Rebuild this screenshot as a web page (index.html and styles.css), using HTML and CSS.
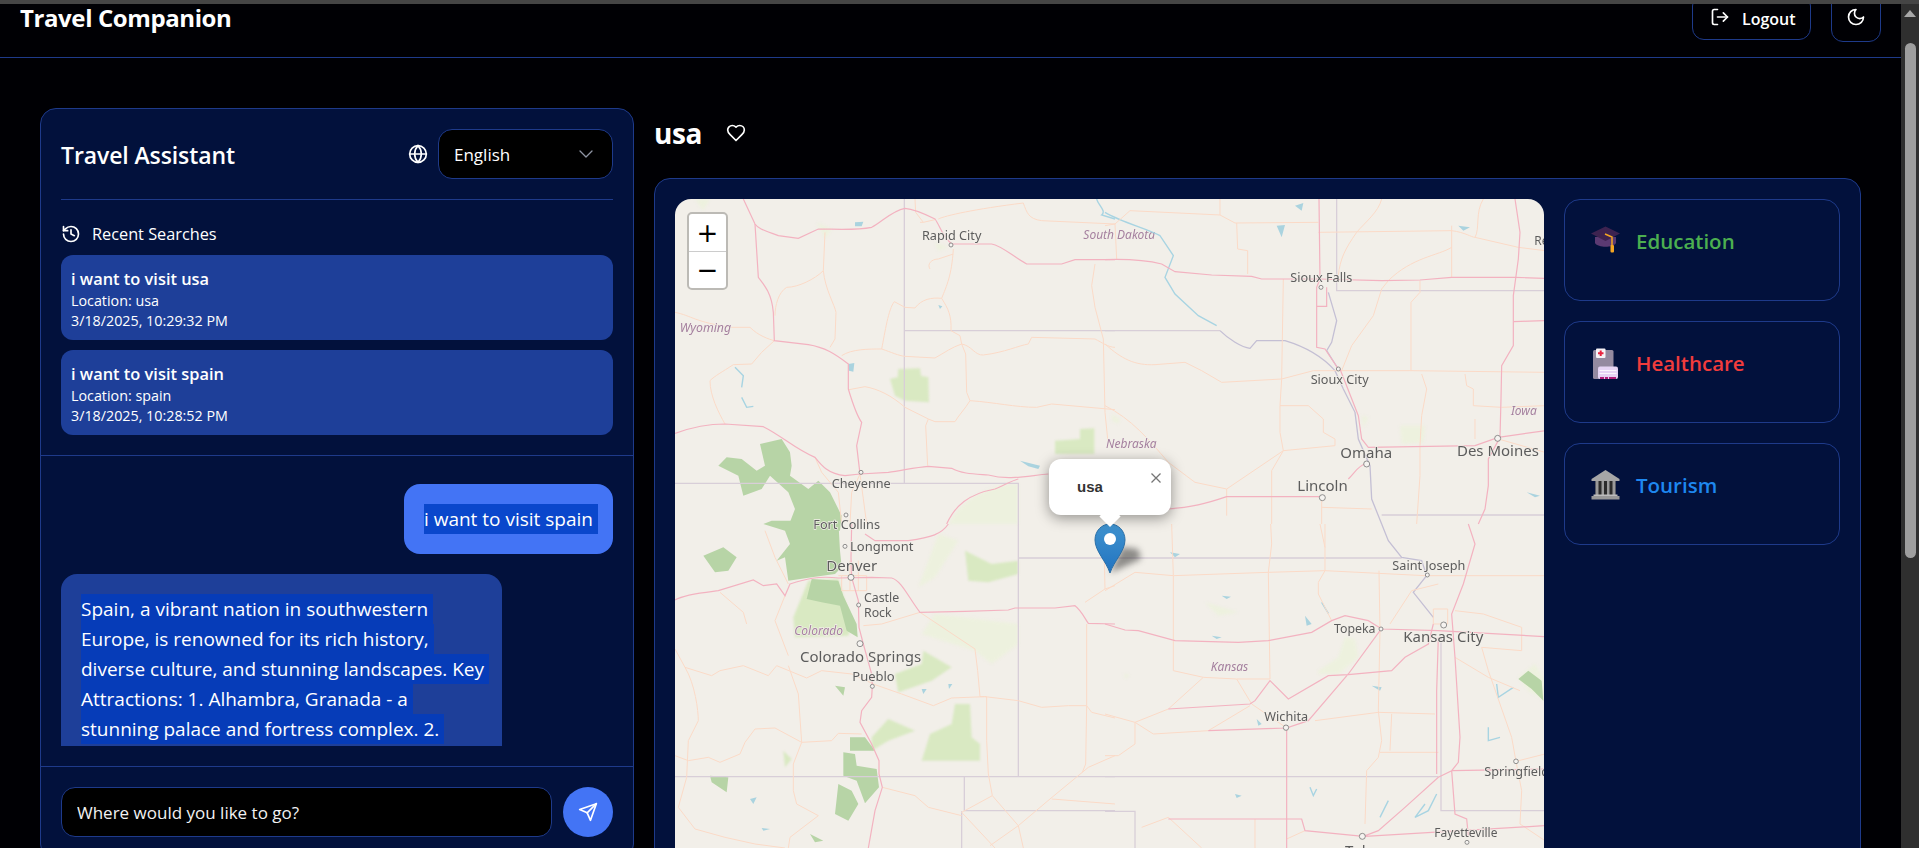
FILE: index.html
```html
<!DOCTYPE html>
<html lang="en">
<head>
<meta charset="utf-8">
<title>Travel Companion</title>
<link rel="stylesheet" href="styles.css">
</head>
<body>
<div class="chrome"></div>
<div class="shell">
  <div class="page">
    <header class="header">
      <h1 class="brand">Travel Companion</h1>
      <div class="header-actions">
        <button class="btn-logout">
          <svg class="ico" viewBox="0 0 24 24"><path d="M9 21H5a2 2 0 0 1-2-2V5a2 2 0 0 1 2-2h4"/><polyline points="16 17 21 12 16 7"/><line x1="21" y1="12" x2="9" y2="12"/></svg>
          <span>Logout</span>
        </button>
        <button class="btn-theme">
          <svg class="ico" viewBox="0 0 24 24"><path d="M12 3a6 6 0 0 0 9 9 9 9 0 1 1-9-9Z"/></svg>
        </button>
      </div>
    </header>
    <main class="main">
      <section class="assistant">
        <div class="assistant-head">
          <h2 class="assistant-title">Travel Assistant</h2>
          <div class="lang">
            <svg class="ico" viewBox="0 0 24 24"><circle cx="12" cy="12" r="10"/><path d="M12 2a14.5 14.5 0 0 0 0 20 14.5 14.5 0 0 0 0-20"/><path d="M2 12h20"/></svg>
            <div class="select">
              <span>English</span>
              <svg class="chev" viewBox="0 0 24 24"><path d="m6 9 6 6 6-6"/></svg>
            </div>
          </div>
        </div>
        <div class="recent">
          <div class="recent-title">
            <svg class="ico" viewBox="0 0 24 24"><path d="M3 12a9 9 0 1 0 9-9 9.75 9.75 0 0 0-6.74 2.74L3 8"/><path d="M3 3v5h5"/><path d="M12 7v5l4 2"/></svg>
            <span>Recent Searches</span>
          </div>
          <div class="recent-item">
            <div class="recent-q">i want to visit usa</div>
            <div class="recent-meta">Location: usa</div>
            <div class="recent-meta">3/18/2025, 10:29:32 PM</div>
          </div>
          <div class="recent-item">
            <div class="recent-q">i want to visit spain</div>
            <div class="recent-meta">Location: spain</div>
            <div class="recent-meta">3/18/2025, 10:28:52 PM</div>
          </div>
        </div>
        <div class="messages">
          <div class="bubble bubble-user"><span class="sel sel-user">i want to visit spain</span></div>
          <div class="bubble bubble-ai">
            <span class="sel">Spain, a vibrant nation in southwestern</span>
            <span class="sel">Europe, is renowned for its rich history,</span>
            <span class="sel">diverse culture, and stunning landscapes. Key</span>
            <span class="sel">Attractions: 1. Alhambra, Granada - a</span>
            <span class="sel">stunning palace and fortress complex. 2.</span>
          </div>
        </div>
        <form class="composer">
          <input class="composer-input" type="text" placeholder="Where would you like to go?">
          <button class="composer-send" type="button">
            <svg class="ico" viewBox="0 0 24 24"><path d="m22 2-7 20-4-9-9-4Z"/><path d="M22 2 11 13"/></svg>
          </button>
        </form>
      </section>

      <section class="destination">
        <div class="dest-head">
          <h2 class="dest-title">usa</h2>
          <svg class="ico" viewBox="0 0 24 24"><path d="M19 14c1.49-1.46 3-3.21 3-5.5A5.5 5.5 0 0 0 16.5 3c-1.76 0-3 .5-4.5 2-1.5-1.5-2.74-2-4.5-2A5.5 5.5 0 0 0 2 8.5c0 2.3 1.5 4.05 3 5.5l7 7Z"/></svg>
        </div>
        <div class="dest-panel">
          <div class="map">
            <svg class="map-art" viewBox="0 0 869 700">
              <!-- north-west quadrant -->
              <g transform="scale(.33333)">
                <path class="fd" d="M255 735 L320 720 L345 760 L350 800 L345 830 L400 870 L430 845 L465 880 L500 950 L495 995 L335 995 L360 930 L340 880 L285 830 L260 870 L205 890 L190 830 L130 800 L155 775 L200 780 L245 815 L270 800 Z"/>
                <path class="fl" d="M670 510 L735 508 L738 530 L760 535 L762 610 L690 605 L660 590 L645 540 L668 535 Z"/>
                <path class="fl" d="M1140 725 L1215 720 L1215 690 L1258 688 L1258 765 L1140 765 Z"/>
                <path class="fp" d="M820 975 C860 900 930 870 1000 855 L1030 855 L1030 975 Z"/>
                <path class="fp" d="M780 130 L820 145 L790 155 Z M425 70 L470 90 L450 120 Z M60 0 L105 0 L85 35 Z"/>
                <path class="wa" d="M1035 785 L1095 800 L1090 810 L1060 802 Z M540 70 L565 68 L560 82 L540 82 Z M520 495 L538 492 L535 518 L522 515 Z M790 318 L802 322 L795 330 Z"/>
                <path class="ri" d="M180 505 L205 530 L200 565 M200 595 L215 625 L235 622 M1265 0 C1270 20 1295 35 1280 48 L1320 60"/>
                <path class="b" d="M688 0 V853 M688 395 H1320 M0 853 H1030 V975"/>
                <path class="r" d="M720 0 L722 40 L745 70 L780 62 M745 70 L735 70 M790 60 C810 50 900 30 1045 12 C1055 40 1060 60 1100 65 L1320 75"/>
                <path class="r" d="M450 100 L445 215 C450 270 480 320 483 340 L480 420 L465 445 M445 215 C420 240 370 265 335 265 C310 280 300 320 300 350"/>
                <path class="r" d="M0 340 C50 350 60 370 170 385 L225 385 C250 410 280 420 298 425 L260 460 L230 495 L175 497 C140 520 120 530 105 545 C105 590 130 640 150 675"/>
                <path class="r" d="M500 470 C530 450 580 450 620 450 C650 460 670 470 690 472 L780 477 C810 460 830 445 860 435 C890 440 900 470 925 468 C990 460 1030 440 1060 435 L1070 415 L1260 420 C1280 430 1300 445 1320 445"/>
                <path class="r" d="M620 450 C630 400 640 330 658 308 L690 325 L720 327 C740 300 770 295 800 298 C820 330 830 350 828 395 L855 410 L860 435 L872 465 L875 580 L885 605 C960 610 1020 625 1085 625 L1130 615 L1320 632"/>
                <path class="r" d="M885 605 C870 630 850 650 840 668 L780 668 L760 660 L690 625 C650 590 610 570 570 563 L522 572 M760 660 L752 680 L758 800 M800 298 C815 260 830 230 835 150 M835 165 L790 180 C770 180 755 195 765 210"/>
                <path class="r" d="M1260 195 L1250 260 L1260 325 L1285 420 L1290 640 L1300 740 M420 775 L440 820 L490 880 L500 975 M555 825 L565 900 L575 975 M525 975 L530 880 L555 825"/>
                <path class="m" d="M205 0 L240 75 C250 90 270 95 310 110 L370 118 L430 90 C480 90 540 95 590 85 C620 70 650 35 690 28 C720 30 760 50 780 60 C795 80 800 110 830 135 L950 135 C980 140 1010 170 1055 195 L1160 195 L1200 182 L1320 182"/>
                <path class="m" d="M240 75 L250 235 C270 260 290 285 295 340 L298 425 L400 437 C450 445 480 465 520 495 L520 570 C535 620 545 650 560 670 L545 740 L555 825"/>
                <path class="m" d="M0 703 C50 685 100 675 150 675 L265 683 C320 710 360 750 420 775 C440 800 460 825 510 830 L555 825 L640 820 C680 815 720 805 760 802 L830 808 C860 825 900 825 940 828 C1000 845 1060 830 1120 825 M815 975 C840 920 880 885 960 870 C985 860 1010 845 1030 840"/>
                <circle class="dot" cx="828" cy="138" r="6"/>
                <circle class="dot" cx="558" cy="820" r="6"/>
                <circle class="dot" cx="513" cy="948" r="6"/>
                <text class="city" font-size="38" x="741" y="124">Rapid City</text>
                <text class="state" font-size="37" x="14" y="400">Wyoming</text>
                <text class="state" font-size="36" x="1225" y="120">South Dakota</text>
                <text class="city" font-size="38" x="470" y="866">Cheyenne</text>
              </g>
              <!-- north-east quadrant -->
              <g transform="translate(430 0) scale(.33333)">
                <path class="fp" d="M20 645 L45 660 L40 675 L22 665 Z M885 680 L960 680 L955 730 L890 735 Z M770 650 L790 655 L775 685 Z"/>
                <path class="wa" d="M515 80 L540 78 L530 115 Z M570 20 L595 12 L590 35 Z M1060 80 L1095 85 L1075 95 Z M1265 880 L1305 890 L1290 895 Z"/>
                <path class="ri" d="M0 40 C50 70 130 90 165 110 L205 170 L180 235 L210 285 L280 350 L335 380"/>
                <path class="b" d="M695 0 V275 H1320 M0 395 H345 M830 948 H1320"/>
                <path class="bw" d="M345 395 C370 420 410 445 435 448 L455 425 L540 425 C590 440 650 470 690 515 L715 570 L750 640 L760 720 L795 800 L800 900 L830 975 M670 280 L695 365 L680 430 L665 455 L700 510"/>
                <path class="r" d="M0 80 L30 75 L75 35 L345 48 L390 72 L640 70 M345 0 L345 48 M395 72 L398 150 L428 155 L428 225 M30 75 L35 180"/>
                <path class="r" d="M640 100 L1040 95 C1080 100 1100 115 1110 115 L1240 145 L1320 155 M830 0 C820 40 780 70 755 100 C720 150 705 180 700 230"/>
                <path class="r" d="M1040 145 C1000 170 920 175 850 245 L830 270 L805 350 L740 440 L710 515 M1040 80 V235 M945 245 V280 L918 310 V515 M1135 0 C1110 40 1125 90 1110 115"/>
                <path class="r" d="M0 435 C50 480 90 500 150 497 L240 490 L290 515 L350 550 L530 540 L625 515 L700 515 L915 515 L1320 520"/>
                <path class="r" d="M535 240 L530 540 L525 620 L525 700 L535 755 L500 815 V975 M525 620 L610 620 L655 660 V700 L690 720 V740 L535 755 L365 870 V950"/>
                <path class="r" d="M0 620 C80 660 130 720 190 790 L270 850 L365 870 M950 525 L965 570 L950 650 L945 740 V830 L935 975 M1080 525 L1085 560 L1105 570 V620 L1190 625 L1320 620 M1110 660 V720 M650 893 V975 M650 925 L800 930 M1180 720 L1320 760"/>
                <path class="m" d="M0 182 C60 180 130 185 170 195 L210 218 L320 228 L440 232 L470 240 L640 240 L830 245 L945 243 L1040 235 L1230 235 L1320 238"/>
                <path class="m" d="M642 0 L645 240 L635 265 V445 L660 450 L700 510 M635 265 V322 H665 V265"/>
                <path class="m" d="M1230 0 L1245 100 L1240 180 L1225 290 V440 L1190 500 L1188 600 L1185 715 L1150 780 V860 L1140 930 L1120 975"/>
                <path class="m" d="M705 510 L760 650 L770 720 L790 745 L1110 740 L1180 715 L1320 695 M190 930 C260 925 300 915 365 893 H650 M730 840 C750 820 760 800 780 795 M1225 368 L1320 365"/>
                <circle class="dot" cx="648" cy="265" r="6"/>
                <circle class="dot" cx="700" cy="510" r="6"/>
                <circle class="dot" cx="785" cy="795" r="9"/>
                <circle class="dot" cx="652" cy="896" r="9"/>
                <circle class="dot" cx="1178" cy="718" r="9"/>
                <text class="city" font-size="38" x="556" y="250">Sioux Falls</text>
                <text class="city" font-size="38" x="617" y="555">Sioux City</text>
                <text class="city" font-size="45" x="706" y="776">Omaha</text>
                <text class="city" font-size="45" x="1056" y="770">Des Moines</text>
                <text class="city" font-size="45" x="577" y="877">Lincoln</text>
                <text class="city" font-size="36" x="1288" y="137">Re</text>
                <text class="state" font-size="36" x="1218" y="647">Iowa</text>
                <text class="state" font-size="36" x="3" y="748">Nebraska</text>
              </g>
              <!-- south-west quadrant -->
              <g transform="translate(0 325) scale(.33333)">
                <path class="fp" d="M740 330 L900 380 L950 420 L1030 360 V300 L780 270 Z M730 190 L790 30 L850 50 L780 160 Z"/>
                <path class="fl" d="M590 640 L640 585 L720 620 L640 650 L590 680 Z M765 630 L830 600 L840 540 L885 540 L890 640 L915 660 V710 H740 Z M660 450 L740 420 L745 380 L830 430 L770 470 L670 505 Z M870 80 L950 120 L1030 110 V150 L940 175 L880 170 Z M400 170 L490 165 L530 300 L520 335 L360 340 L355 280 Z M325 680 L350 705 L330 730 Z"/>
                <path class="fd" d="M265 0 L290 -10 H490 L495 80 L500 130 L480 150 L410 160 L340 170 L330 100 L305 110 L345 60 L330 20 Z M85 95 L145 70 L185 100 L160 140 L120 145 Z M505 685 L540 690 L545 725 L605 735 L612 790 L570 838 L545 770 L505 755 Z M490 780 L530 800 L550 840 L520 890 L480 870 Z M105 755 L160 760 L155 805 L110 775 Z M525 640 L570 640 L600 680 L525 680 Z M480 485 L510 490 L505 515 Z M405 930 L445 950 L420 955 Z"/>
                <path class="fd" d="M410 165 L490 170 L505 215 L545 300 L548 340 L515 320 L495 245 L440 235 L395 225 Z"/>
                <path class="wa" d="M740 495 L755 495 L745 510 Z M820 480 L832 480 L822 495 Z M225 825 L245 820 L235 840 Z M260 912 L285 915 L265 920 Z"/>
                <path class="b" d="M1030 0 V757 M1030 102 H1320 M0 758 H1320 M868 758 V860 H1320 M860 862 V972"/>
                <path class="r" d="M0 375 L30 430 L110 455 L135 440 L205 425 L280 455 L305 425 L395 462 L440 440 L530 450 L600 482 L680 510 L775 545 L830 522 L930 518 L1030 530 L1100 550 L1180 545 H1235 L1250 565 L1320 582"/>
                <path class="r" d="M30 430 C60 480 70 560 70 590 L40 650 L35 760 L10 850 L60 915 L150 940 L240 960 L330 972 M0 695 L40 710 L100 700 L135 715 L195 690 L210 655 L240 615 L300 612 L380 655 L470 650 L490 628 L560 630"/>
                <path class="r" d="M380 655 L355 720 V800 L365 840 L430 875 L345 940 L340 972 M340 425 L370 510 L380 655 M135 205 L205 265 L215 300 M330 215 L300 290 L340 395 M270 20 L300 100 L340 180"/>
                <path class="r" d="M735 265 L900 375 L908 440 L915 518 H935 V650 L940 750 L952 815 L1030 905 L1045 972 M1320 695 L1240 730 L1125 825 L1030 905 L945 965 M952 815 L860 865 L960 972 M622 790 L720 815 L760 850 L860 875 M565 305 L620 300 L735 265 M1130 825 L1320 840 M1235 545 L1232 720 L1222 745 M1235 300 V545 M1230 235 L1290 195 L1320 185 M1290 195 L1288 100"/>
                <path class="r" d="M490 155 H575 V200 H500 V155 M525 110 V200 M550 110 V200"/>
                <path class="m" d="M820 0 C800 30 770 40 700 50 H600 L570 30 M0 228 C30 210 90 205 130 200 L235 168 L265 185 L305 180 L330 215 L345 180 C390 165 430 155 490 162 L590 160 L650 162 C680 170 700 220 735 265 L870 262 L1000 258 L1020 252 H1140 L1200 245 C1220 260 1230 285 1240 298 L1320 300"/>
                <path class="m" d="M530 0 L528 100 L530 160 L550 230 L552 310 L565 360 L590 450 L592 487 L590 520 L560 560 L555 595 L590 660 L612 710 V750 L622 790 L600 860 L580 972"/>
                <circle class="dot" cx="510" cy="67" r="6"/>
                <circle class="dot" cx="528" cy="160" r="9"/>
                <circle class="dot" cx="551" cy="243" r="6"/>
                <circle class="dot" cx="555" cy="359" r="9"/>
                <circle class="dot" cx="592" cy="487" r="6"/>
                <text class="city" font-size="38" x="415" y="15">Fort Collins</text>
                <text class="city" font-size="39" x="525" y="80">Longmont</text>
                <text class="city" font-size="45" x="454" y="142">Denver</text>
                <text class="city" font-size="37" x="567" y="235">Castle</text>
                <text class="city" font-size="37" x="567" y="280">Rock</text>
                <text class="state" font-size="36" x="358" y="332">Colorado</text>
                <text class="city" font-size="45" x="375" y="414">Colorado Springs</text>
                <text class="city" font-size="39" x="532" y="470">Pueblo</text>
              </g>
              <!-- south-east quadrant -->
              <g transform="translate(430 325) scale(.33333)">
                <path class="fp" d="M640 440 L700 400 L720 340 L750 345 L760 400 L700 450 L640 450 Z M300 235 L400 265 L340 275 Z M55 450 L75 452 L62 465 Z M1240 460 L1290 420 L1320 470 V530 L1270 500 Z"/>
                <path class="fd" d="M1240 465 L1270 440 L1310 470 L1315 530 L1280 495 Z"/>
                <path class="wa" d="M195 85 L225 90 L210 100 Z M350 215 L378 218 L365 225 Z M600 275 L620 300 L605 305 Z M320 335 L350 340 L335 345 Z M455 585 L470 600 L460 605 Z M800 485 L830 490 L825 500 Z M390 810 L410 815 L395 822 Z"/>
                <path class="ri" d="M650 235 L670 268 M1150 610 L1150 650 L1185 640 M1175 480 L1180 520 L1225 490 M960 840 L930 880 L970 860 L995 810 M850 830 L825 880 M615 790 L625 815 L635 795"/>
                <path class="b" d="M0 102 H890 M0 758 H1000 M1008 340 V860 H1320 M0 862 H90 V972"/>
                <path class="bw" d="M830 0 L850 50 L890 100 L950 110 L965 155 L925 205 L985 280"/>
                <path class="r" d="M0 200 L90 145 L205 155 L490 145 L660 140 L960 155 L1075 155 L1320 155 M200 0 L205 155 V440 L295 460 L395 465 H495 L490 145 L500 60 L497 0"/>
                <path class="r" d="M660 0 V140 L640 175 V210 L680 290 M645 0 L660 70 M822 140 L825 320 L820 560 L830 650 L820 700 L785 740 L780 900 M295 460 L190 555 L90 595 L0 570 M395 465 L440 540 L545 612 M90 595 V660 L40 695 H0 M90 595 L145 630 L310 620 L435 545"/>
                <path class="r" d="M1050 260 L1135 270 L1250 310 V380 L1130 370 L1150 440 L1220 640 L1233 712 L1320 690 M1050 400 L1150 460 L1245 500 M630 590 L820 565 L990 570 M825 685 H1000 M860 570 L855 680 M110 910 L190 880 L290 972 M450 885 V972 M600 920 L545 945 M1233 712 L1250 800 L1245 900 L1320 950 M1000 180 L920 200 L855 300 M985 255 H1028 V300 H985 Z"/>
                <path class="m" d="M0 300 L60 318 L100 320 L210 350 L400 355 L490 350 L620 325 L680 290 L720 275 L790 290 L830 315 L1000 320 L1320 338"/>
                <path class="m" d="M825 320 L730 450 L610 590 L545 612 V972 M310 620 L545 612 M985 300 L970 360 L900 400 L860 440 L730 452 L670 455 L550 525 L495 470 L450 530 L435 540 L190 555"/>
                <path class="m" d="M1090 0 L1110 60 L1075 180 L1040 270 L1050 400 L1065 640 L1060 715 L1040 740 L1000 760 L900 850 L820 920 L775 937 L600 920 L590 885 H190 M1040 740 L1320 735 M1040 740 L1050 870 L1085 885 L1090 935 M1000 340 L995 500 V750 M780 937 L1320 905"/>
                <circle class="dot" cx="967" cy="153" r="6"/>
                <circle class="dot" cx="828" cy="315" r="6"/>
                <circle class="dot" cx="1016" cy="303" r="9"/>
                <circle class="dot" cx="543" cy="611" r="8"/>
                <circle class="dot" cx="1233" cy="712" r="7"/>
                <circle class="dot" cx="772" cy="937" r="9"/>
                <circle class="dot" cx="1086" cy="955" r="6"/>
                <text class="city" font-size="38" x="862" y="138">Saint Joseph</text>
                <text class="city" font-size="37" x="687" y="328">Topeka</text>
                <text class="city" font-size="45" x="895" y="355">Kansas City</text>
                <text class="state" font-size="36" x="317" y="440">Kansas</text>
                <text class="city" font-size="38" x="478" y="592">Wichita</text>
                <text class="city" font-size="38" x="1138" y="755">Springfield</text>
                <text class="city" font-size="36" x="988" y="940">Fayetteville</text>
                <text class="city" font-size="45" x="720" y="995">Tulsa</text>
              </g>
            </svg>

            <div class="zoom">
              <div class="zoom-btn">+</div>
              <div class="zoom-btn">&#8722;</div>
            </div>

            <svg class="pin" viewBox="0 0 70 56">
              <defs>
                <linearGradient id="pinFill" x1="0" y1="0" x2="0" y2="1">
                  <stop offset="0" stop-color="#3f93cf"/>
                  <stop offset="1" stop-color="#2273c0"/>
                </linearGradient>
              </defs>
              <path class="pin-shadow" d="M16 50 L28 24 L44 26 L47 36 Z"/>
              <path d="M16 50 C12 38 1 28 1 17 C1 8 7.500 1 16 1 C24.500 1 31 8 31 17 C31 28 20 38 16 50 Z" fill="url(#pinFill)" stroke="#2a6fa8"/>
              <circle cx="16" cy="16" r="6" fill="#fff"/>
            </svg>

            <div class="popup">
              <b class="popup-text">usa</b>
              <svg class="popup-close" viewBox="0 0 12 12"><path d="M1.500 1.500 10.500 10.500 M10.500 1.500 1.500 10.500"/></svg>
              <span class="popup-tip"></span>
            </div>
          </div>

          <aside class="topics">
            <div class="topic">
              <svg class="emoji" viewBox="0 0 29 31">
                <path d="M4 11H25V17C22 22 7 22 4 17Z" fill="#5b3a72"/>
                <path d="M0 7.500 14.500 .5 29 7.500 14.500 15Z" fill="#3d2350"/>
                <path d="M14 8 21 11V20" fill="none" stroke="#f5a623" stroke-width="1.500"/>
                <rect x="19.500" y="19" width="3.500" height="7.500" rx="1" fill="#f5a623"/>
              </svg>
              <span class="topic-label topic-green">Education</span>
            </div>
            <div class="topic">
              <svg class="emoji" viewBox="0 0 29 31">
                <rect x="2" y="2" width="20.500" height="29" rx="1.500" fill="#948aa0"/>
                <rect x="5" y=".5" width="9.500" height="9.500" rx="1" fill="#f6f2f6"/>
                <path d="M9.700 2.500V8M7 5.200H12.500" stroke="#e8233f" stroke-width="2"/>
                <rect x="7" y="18.500" width="20" height="12.500" rx="2" fill="#e6d5f5"/>
                <path d="M8.500 22.500H25.500M8.500 25.500H25.500" stroke="#fff" stroke-width=".8"/>
                <path d="M9 29H13V31H9ZM14 29H17V31H14ZM18 29H25V31H18Z" fill="#b0207a"/>
              </svg>
              <span class="topic-label topic-red">Healthcare</span>
            </div>
            <div class="topic">
              <svg class="emoji" viewBox="0 0 29 31">
                <path d="M14.500 0 .5 9V11H28.500V9Z" fill="#a6a6a6"/>
                <rect x="4.500" y="11" width="20" height="14" fill="#2b2b2b"/>
                <path d="M4.500 11H7.500V25H4.500ZM10.500 11H13V25H10.500ZM16 11H18.500V25H16ZM21.500 11H24.500V25H21.500Z" fill="#9a9a9a"/>
                <rect x="2.500" y="24.500" width="24" height="1.500" fill="#bdbdbd"/>
                <rect x=".5" y="26" width="28" height="3.500" fill="#989898"/>
              </svg>
              <span class="topic-label topic-blue">Tourism</span>
            </div>
          </aside>
        </div>
      </section>
    </main>
  </div>
  <div class="scrollbar">
    <span class="scroll-arrow"></span>
    <span class="scroll-thumb"></span>
  </div>
</div>
</body>
</html>
```

FILE: styles.css
```css
* { box-sizing: border-box; }

html, body { height: 100%; }

body {
  margin: 0;
  display: flex;
  flex-direction: column;
  overflow: hidden;
  background: #000;
  color: #fff;
  font-family: "Open Sans", "Noto Sans", sans-serif;
  font-size: 17px;
}

h1, h2 { margin: 0; }

button {
  font: inherit;
  color: inherit;
  cursor: pointer;
}

.ico {
  flex: none;
  width: 20px;
  height: 20px;
  fill: none;
  stroke: currentColor;
  stroke-width: 2;
  stroke-linecap: round;
  stroke-linejoin: round;
}

.chrome {
  flex: none;
  height: 4px;
  background: #454545;
}

.shell {
  flex: 1;
  min-height: 0;
  display: flex;
}

.page {
  flex: 1;
  min-width: 0;
  overflow: hidden;
  background: #000004;
}

/* the page is scrolled a little: the header's top edge is off-screen */
.header {
  margin-top: -28px;
  display: flex;
  align-items: center;
  justify-content: space-between;
  padding: 16px 20px 15px;
  border-bottom: 1px solid #1e3a8a;
}

.brand {
  font-size: 24px;
  font-weight: 700;
  letter-spacing: -.4px;
  line-height: 26px;
  position: relative;
  top: 1px;
}

.header-actions {
  display: flex;
  align-items: center;
  gap: 20px;
}

.btn-logout {
  width: 119px;
  height: 46px;
  display: flex;
  align-items: center;
  gap: 12px;
  padding: 0 0 0 17px;
  background: transparent;
  border: 1px solid #1e3a8a;
  border-radius: 12px;
  font-size: 16px;
  font-weight: 600;
}

.btn-logout span { position: relative; top: 2px; }

.btn-theme {
  width: 50px;
  height: 50px;
  display: flex;
  align-items: center;
  justify-content: center;
  padding: 0;
  background: transparent;
  border: 1px solid #1e3a8a;
  border-radius: 12px;
}

.main {
  display: grid;
  grid-template-columns: 594px 1fr;
  gap: 20px;
  align-items: start;
  padding: 50px 40px 0;
}

.assistant {
  height: 752px;
  background: #02113c;
  border: 1px solid #1e3a8a;
  border-radius: 16px;
}

.assistant-head {
  display: flex;
  align-items: center;
  justify-content: space-between;
  margin: 0 20px;
  padding: 20px 0;
  border-bottom: 1px solid #1e3a8a;
}

.assistant-title {
  padding-top: 2px;
  font-size: 23px;
  font-weight: 600;
  letter-spacing: -.1px;
}

.lang {
  display: flex;
  align-items: center;
  gap: 10px;
}

.select {
  width: 175px;
  height: 50px;
  display: flex;
  align-items: center;
  justify-content: space-between;
  padding: 0 14px 0 15px;
  background: #000;
  border: 1px solid #1e3a8a;
  border-radius: 14px;
}

.chev {
  width: 24px;
  height: 24px;
  fill: none;
  stroke: #8f95a3;
  stroke-width: 1.300;
  stroke-linecap: round;
  stroke-linejoin: round;
}

.recent {
  display: flex;
  flex-direction: column;
  gap: 10px;
  padding: 21px 20px 20px;
  border-bottom: 1px solid #1e3a8a;
}

.recent-title {
  display: flex;
  align-items: center;
  gap: 11px;
  height: 24px;
  padding-top: 2px;
  font-size: 16.300px;
}

.recent-item {
  height: 85px;
  padding: 12px 10px 0;
  background: #1e3f99;
  border-radius: 12px;
}

.recent-q {
  font-size: 16.400px;
  font-weight: 600;
  line-height: 24px;
}

.recent-meta {
  font-size: 14.300px;
  line-height: 20px;
}

.messages {
  height: 290px;
  margin-bottom: 20px;
  padding: 28px 20px 0;
  display: flex;
  flex-direction: column;
  gap: 20px;
  overflow: hidden;
}

.bubble {
  flex: none;
  padding: 20px;
  border-radius: 16px;
  font-size: 19px;
  line-height: 30px;
}

.bubble-user {
  align-self: flex-end;
  padding-right: 15px;
  background: #4374f5;
}

.bubble-ai {
  width: 441px;
  background: #1e3f99;
}

.sel {
  display: block;
  width: fit-content;
  padding-right: 5px;
  background: #063cb8;
  white-space: nowrap;
}

.sel-user {
  background: #0a47cc;
}

.composer {
  display: flex;
  gap: 11px;
  padding: 20px 20px 0;
  border-top: 1px solid #1e3a8a;
}

.composer-input {
  flex: 1;
  min-width: 0;
  height: 50px;
  padding: 0 15px;
  background: #000;
  color: #fff;
  font: inherit;
  border: 1px solid #1e3a8a;
  border-radius: 14px;
  outline: none;
}

.composer-input::placeholder {
  color: #f2f2f2;
  opacity: 1;
}

.composer-send {
  flex: none;
  width: 50px;
  height: 50px;
  display: flex;
  align-items: center;
  justify-content: center;
  padding: 0;
  background: #4374f5;
  border: 0;
  border-radius: 50%;
}

.dest-head {
  height: 50px;
  margin-bottom: 20px;
  display: flex;
  align-items: center;
  gap: 24px;
}

.dest-title {
  font-size: 28px;
  font-weight: 700;
  letter-spacing: -.4px;
}

.dest-panel {
  display: flex;
  gap: 20px;
  padding: 20px;
  height: 760px;
  background: #02113c;
  border: 1px solid #1e3a8a;
  border-radius: 16px;
}

.map {
  position: relative;
  flex: 1;
  min-width: 0;
  overflow: hidden;
  background: #f2efe9;
  border-radius: 16px;
}

.map-art {
  display: block;
  width: 869px;
  height: 700px;
  filter: blur(.45px);
}

.map-art path { fill: none; vector-effect: non-scaling-stroke; }

.map-art .m { stroke: #f3b2c0; stroke-width: 1.200; }
.map-art .r { stroke: #fbdac7; stroke-width: 1; }
.map-art .b { stroke: #d8ced8; stroke-width: 1.300; }
.map-art .bw { stroke: #c4bfd4; stroke-width: 1.300; }
.map-art .ri { stroke: #a8d4e2; stroke-width: 1.400; }
.map-art .wa { fill: #aad3df; }
.map-art .fd { fill: #b7d4a6; filter: blur(2px); }
.map-art .fl { fill: #d9e9c2; filter: blur(3px); }
.map-art .fp { fill: #edf1de; filter: blur(4px); }

.dot {
  fill: #f5f3f0;
  stroke: #7b7b7b;
  stroke-width: 2.500;
}

.city, .state {
  font-family: "Noto Sans", sans-serif;
  paint-order: stroke;
  stroke: #f2efe9;
  stroke-width: 4;
}

.city { fill: #5c5c5c; }

.state {
  fill: #a5809f;
  font-style: italic;
}

.zoom {
  position: absolute;
  left: 12px;
  top: 13px;
  width: 41px;
  border: 2px solid #bcbab5;
  border-radius: 5px;
  overflow: hidden;
  background: #fff;
}

.zoom-btn {
  height: 37px;
  display: flex;
  align-items: center;
  justify-content: center;
  color: #000;
  font-family: "DejaVu Sans", sans-serif;
  font-size: 26px;
  line-height: 1;
}

.zoom-btn + .zoom-btn { border-top: 1px solid #ccc; }

.pin {
  position: absolute;
  left: 419px;
  top: 324px;
  width: 70px;
  height: 56px;
  overflow: visible;
}

.pin-shadow {
  fill: rgba(40, 40, 40, .5);
  filter: blur(3px);
}

.popup {
  position: absolute;
  left: 374px;
  top: 260px;
  width: 122px;
  height: 56px;
  padding: 18px 0 0 28px;
  background: #fff;
  border-radius: 12px;
  box-shadow: 0 3px 14px rgba(0, 0, 0, .4);
  color: #333;
  font-family: "Liberation Sans", Arial, sans-serif;
}

.popup-text {
  display: block;
  font-size: 15px;
  line-height: 20px;
}

.popup-close {
  position: absolute;
  top: 13px;
  right: 9px;
  width: 12px;
  height: 12px;
  fill: none;
  stroke: #757575;
  stroke-width: 1.300;
}

.popup-tip {
  position: absolute;
  left: 50%;
  bottom: -9px;
  width: 15px;
  height: 15px;
  background: #fff;
  transform: translateX(-50%) rotate(45deg);
}

.topics {
  flex: none;
  width: 276px;
  display: flex;
  flex-direction: column;
  gap: 20px;
}

.topic {
  height: 102px;
  display: flex;
  align-items: flex-start;
  gap: 16px;
  padding: 26px 0 0 26px;
  border: 1px solid #1e3a8a;
  border-radius: 16px;
}

.emoji {
  flex: none;
  width: 29px;
  height: 31px;
}

.topic-label {
  margin-top: 1px;
  font-size: 20.500px;
  font-weight: 600;
  line-height: 28px;
}

.topic-green { color: #4caf50; }
.topic-red { color: #f23c3c; }
.topic-blue { color: #1e88f0; }

.scrollbar {
  flex: none;
  width: 18px;
  display: flex;
  flex-direction: column;
  align-items: center;
  background: #2f2f2f;
}

.scroll-arrow {
  flex: none;
  margin-top: 6px;
  width: 0;
  height: 0;
  border-left: 6px solid transparent;
  border-right: 6px solid transparent;
  border-bottom: 7px solid #a8a8a8;
}

.scroll-thumb {
  flex: none;
  margin-top: 26px;
  width: 11px;
  height: 515px;
  background: #9e9e9e;
  border-radius: 6px;
}
```
